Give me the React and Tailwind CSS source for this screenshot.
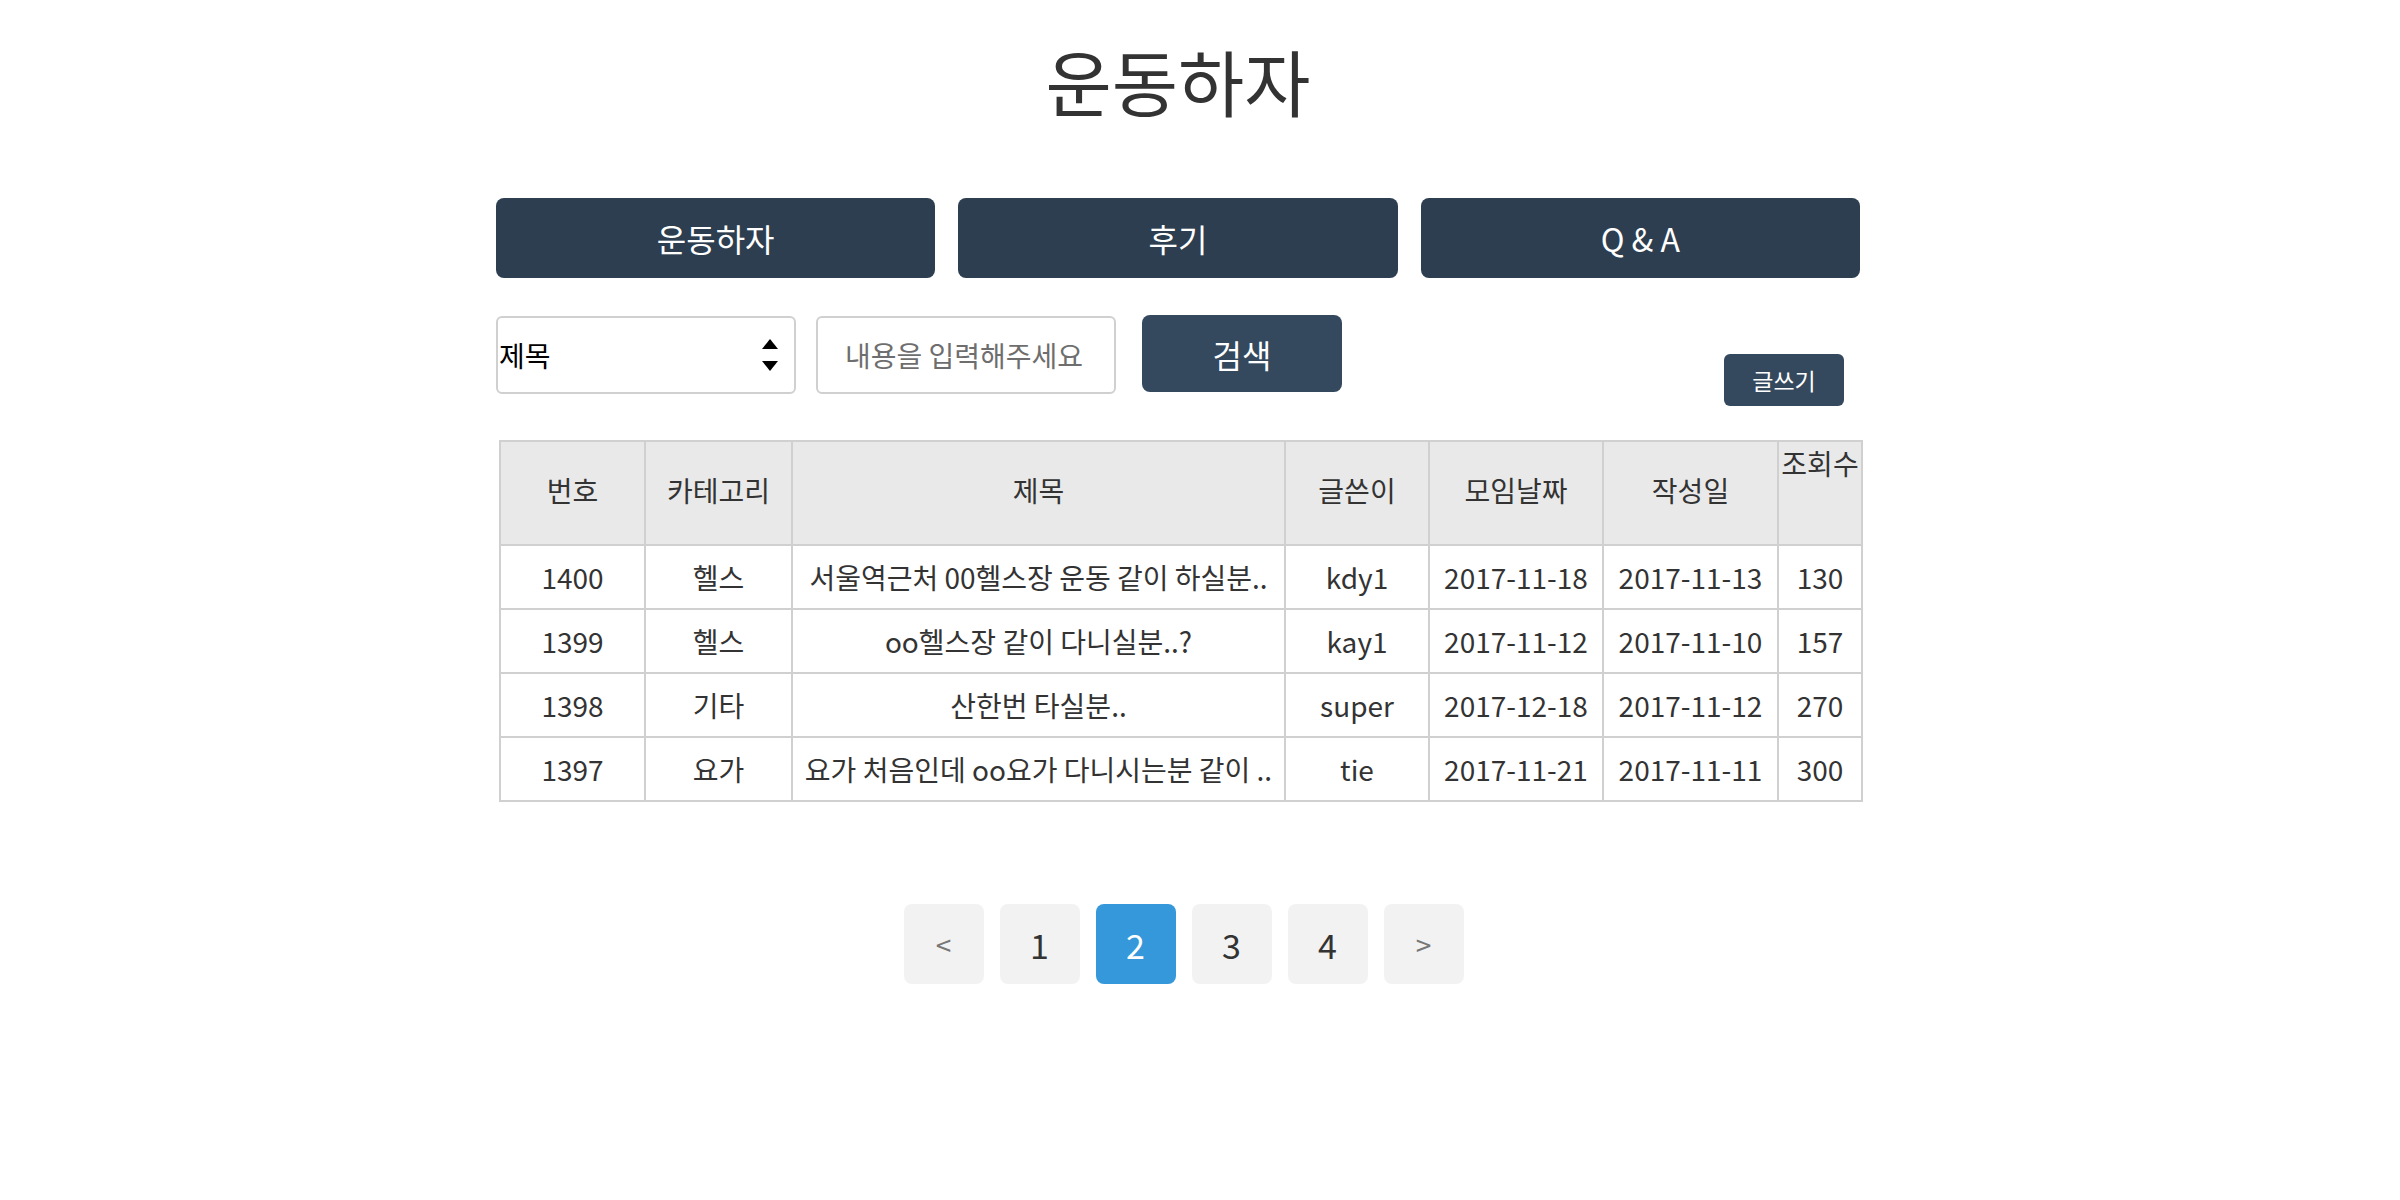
import React from "react";

const rows = [
  ["1400", "헬스", "서울역근처 00헬스장 운동 같이 하실분..", "kdy1", "2017-11-18", "2017-11-13", "130"],
  ["1399", "헬스", "oo헬스장 같이 다니실분..?", "kay1", "2017-11-12", "2017-11-10", "157"],
  ["1398", "기타", "산한번 타실분..", "super", "2017-12-18", "2017-11-12", "270"],
  ["1397", "요가", "요가 처음인데 oo요가 다니시는분 같이 ..", "tie", "2017-11-21", "2017-11-11", "300"],
];

const font = { fontFamily: '"Noto Sans CJK KR", "Noto Sans", sans-serif' };

export default function App() {
  return (
    <div className="min-h-[1200px] w-[2400px] bg-white text-[#333]" style={font}>
      <div className="ml-[496px] w-[1364px] flex flex-col">
        <h1 className="pt-[30px] text-center text-[72px] leading-[100px] font-normal text-[#333]">운동하자</h1>

        <div className="mt-[68px] flex gap-[23px]">
          {["운동하자", "후기", "Q & A"].map((t) => (
            <div key={t} className="flex-1 h-[80px] rounded-[8px] bg-[#2c3e50] text-white text-[32px] flex items-center justify-center">
              {t}
            </div>
          ))}
        </div>

        <div className="mt-[37px] flex items-start">
          <div className="mt-[1px] w-[300px] h-[78px] rounded-[6px] border-2 border-[#d0d0d0] bg-white flex items-center justify-between pl-[1px] pr-[15px]">
            <span className="text-[28px] text-black">제목</span>
            <svg width="18" height="36" viewBox="0 0 18 36">
              <polygon points="9,2 17,12 1,12" fill="#000" />
              <polygon points="1,24 17,24 9,34" fill="#000" />
            </svg>
          </div>
          <input
            className="ml-[20px] mt-[1px] w-[300px] h-[78px] rounded-[6px] border-2 border-[#d0d0d0] bg-white pl-[27px] text-[28px] outline-none placeholder:text-[#6e6e6e]"
            style={font}
            placeholder="내용을 입력해주세요"
          />
          <div className="ml-[26px] w-[200px] h-[77px] rounded-[8px] bg-[#34495e] text-white text-[32px] flex items-center justify-center">
            검색
          </div>
          <div className="ml-auto mr-[16px] mt-[39px] w-[120px] h-[52px] rounded-[6px] bg-[#34495e] text-white text-[23px] flex items-center justify-center">
            글쓰기
          </div>
        </div>

        <table className="mt-[34px] ml-[3px] w-[1362px] table-fixed border-collapse text-[28px] text-[#333]">
          <colgroup>
            <col className="w-[145px]" />
            <col className="w-[147px]" />
            <col className="w-[493px]" />
            <col className="w-[144px]" />
            <col className="w-[174px]" />
            <col className="w-[175px]" />
            <col className="w-[84px]" />
          </colgroup>
          <thead>
            <tr className="h-[104px] bg-[#e9e9e9]">
              {["번호", "카테고리", "제목", "글쓴이", "모임날짜", "작성일"].map((h) => (
                <th key={h} className="border-2 border-[#d0d0d0] font-normal text-center align-middle pb-[6px]">{h}</th>
              ))}
              <th className="border-2 border-[#d0d0d0] font-normal text-center align-top pt-0 whitespace-nowrap">조회수</th>
            </tr>
          </thead>
          <tbody>
            {rows.map((r) => (
              <tr key={r[0]} className="h-[64px]">
                {r.map((c, i) => (
                  <td key={i} className="border-2 border-[#d0d0d0] text-center align-middle whitespace-nowrap overflow-hidden">{c}</td>
                ))}
              </tr>
            ))}
          </tbody>
        </table>

        <div className="mt-[102px] pl-[11px] flex justify-center gap-[16px]">
          {["<", "1", "2", "3", "4", ">"].map((p) => {
            const active = p === "2";
            const arrow = p === "<" || p === ">";
            return (
              <div
                key={p}
                className={
                  "w-[80px] h-[80px] rounded-[8px] flex items-center justify-center " +
                  (active ? "bg-[#3498db] text-white text-[34px]" : arrow ? "bg-[#f2f2f2] text-[#777] text-[28px]" : "bg-[#f2f2f2] text-[#333] text-[34px]")
                }
              >
                {p}
              </div>
            );
          })}
        </div>
      </div>
    </div>
  );
}
